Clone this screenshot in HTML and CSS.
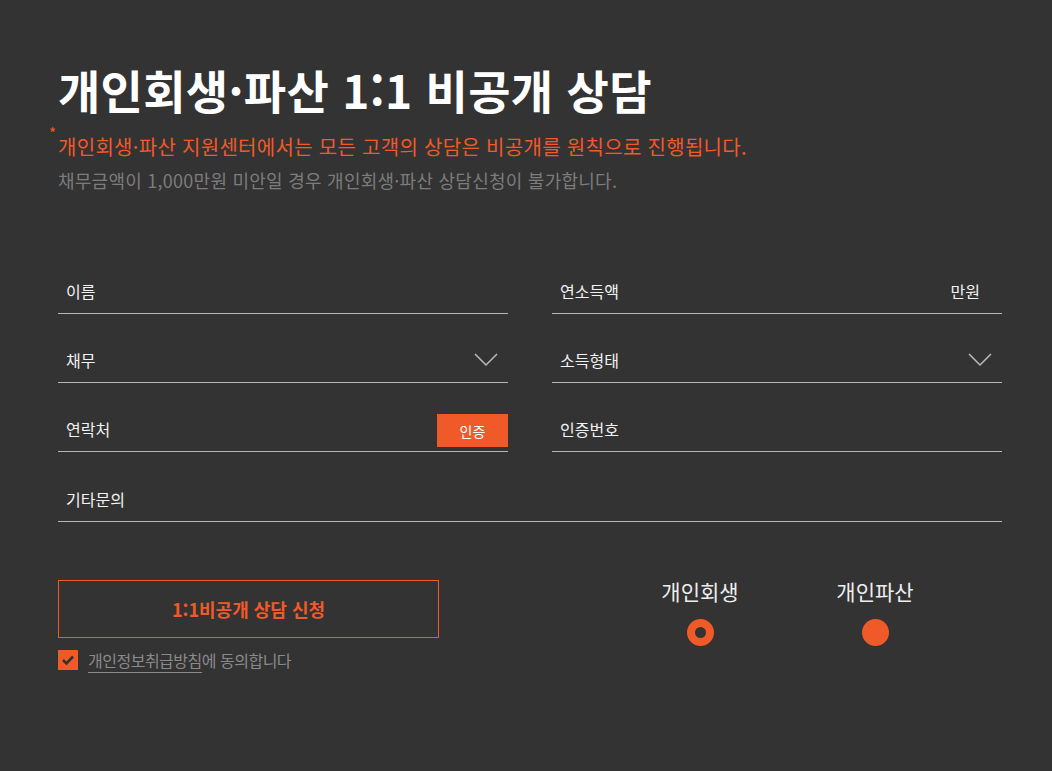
FILE: index.html
```html
<!DOCTYPE html>
<html lang="ko">
<head>
<meta charset="utf-8">
<link rel="stylesheet" href="styles.css">
</head>
<body>
<div class="page">
  <h1 class="title">개인회생·파산 1:1 비공개 상담</h1>
  <p class="notice"><span class="star">*</span>개인회생·파산 지원센터에서는 모든 고객의 상담은 비공개를 원칙으로 진행됩니다.</p>
  <p class="sub">채무금액이 1,000만원 미안일 경우 개인회생·파산 상담신청이 불가합니다.</p>

  <div class="form">
    <div class="field"><span class="label">이름</span></div>
    <div class="field"><span class="label">연소득액</span><span class="unit">만원</span></div>
    <div class="field"><span class="label">채무</span>
      <svg class="chev" width="24" height="14" viewBox="0 0 24 14"><path d="M1 1 L12 12 L23 1" fill="none" stroke="#bbb" stroke-width="1.5"/></svg>
    </div>
    <div class="field"><span class="label">소득형태</span>
      <svg class="chev" width="24" height="14" viewBox="0 0 24 14"><path d="M1 1 L12 12 L23 1" fill="none" stroke="#bbb" stroke-width="1.5"/></svg>
    </div>
    <div class="field field-btn"><span class="label">연락처</span><button class="auth">인증</button></div>
    <div class="field"><span class="label">인증번호</span></div>
    <div class="field wide"><span class="label">기타문의</span></div>
  </div>

  <div class="bottom">
    <div class="submit-area">
      <button class="submit">1:1비공개 상담 신청</button>
      <div class="agree">
        <span class="check">
          <svg width="20" height="20" viewBox="0 0 20 20"><path d="M5 10 L8.5 13.5 L15 6.5" fill="none" stroke="#333" stroke-width="2.6"/></svg>
        </span>
        <span class="agree-text"><span class="link">개인정보취급방침</span>에 동의합니다</span>
      </div>
    </div>
    <div class="radios">
      <div class="radio-item">
        <span class="radio-label">개인회생</span>
        <span class="radio on"></span>
      </div>
      <div class="radio-item">
        <span class="radio-label">개인파산</span>
        <span class="radio"></span>
      </div>
    </div>
  </div>
</div>
</body>
</html>
```

FILE: styles.css
```css
* { box-sizing: border-box; }
html, body {
  margin: 0;
  padding: 0;
  background: #333333;
  font-family: "Noto Sans CJK KR", "Noto Sans", sans-serif;
}
.page {
  width: 1052px;
  height: 771px;
  padding: 61px 50px 0 58px;
}
.title {
  margin: 0;
  font-size: 46px;
  line-height: 56px;
  font-weight: 700;
  color: #ffffff;
  letter-spacing: 0.3px;
}
.notice {
  position: relative;
  margin: 16px 0 0;
  font-size: 20px;
  line-height: 28px;
  color: #f05a28;
  letter-spacing: 0.3px;
}
.star {
  position: absolute;
  left: -9px;
  top: -8px;
  font-size: 15px;
  line-height: 15px;
}
.sub {
  margin: 5px 0 0;
  font-size: 18px;
  line-height: 28px;
  color: #7c7c7c;
  letter-spacing: 0.25px;
}
.form {
  margin-top: 74px;
  width: 944px;
  display: grid;
  grid-template-columns: 450px 450px;
  column-gap: 44px;
  row-gap: 23px;
}
.field {
  height: 46px;
  border-bottom: 1px solid #b5b5b5;
  display: flex;
  align-items: center;
  justify-content: space-between;
  padding: 0 10px 0 8px;
}
.wide { grid-column: 1 / 3; margin-top: 1px; }
.label {
  font-size: 16px;
  color: #f2f2f2;
}
.unit {
  font-size: 16px;
  color: #f2f2f2;
  margin-right: 12px;
}
.chev { display: block; margin-top: 0; }
.field-btn { padding-right: 0; }
.auth {
  width: 71px;
  height: 33px;
  margin-top: 4px;
  border: none;
  background: #f05a28;
  color: #fff;
  font-family: inherit;
  font-size: 14px;
  padding: 0;
}
.bottom {
  margin-top: 58px;
  display: flex;
}
.submit-area { width: 381px; }
.submit {
  display: block;
  width: 381px;
  height: 58px;
  background: transparent;
  border: 1px solid #f05a28;
  color: #f05a28;
  font-family: inherit;
  font-size: 18px;
  font-weight: 700;
  padding: 0;
}
.agree {
  margin-top: 10px;
  display: flex;
  align-items: center;
}
.check {
  width: 20px;
  height: 20px;
  background: #f05a28;
  display: block;
}
.check svg { display: block; }
.agree-text {
  margin-left: 10px;
  font-size: 16px;
  color: #8a8a8a;
  letter-spacing: -0.5px;
}
.link {
  border-bottom: 1px solid #8a8a8a;
}
.radios {
  display: flex;
  margin-left: 201px;
  gap: 55px;
  margin-top: -4px;
}
.radio-item {
  width: 120px;
  display: flex;
  flex-direction: column;
  align-items: center;
}
.radio-label {
  font-size: 21px;
  line-height: 30px;
  color: #eeeeee;
}
.radio {
  margin-top: 13px;
  width: 27px;
  height: 27px;
  border-radius: 50%;
  background: #f05a28;
}
.radio.on {
  background: #333;
  border: 8px solid #f05a28;
}
```
